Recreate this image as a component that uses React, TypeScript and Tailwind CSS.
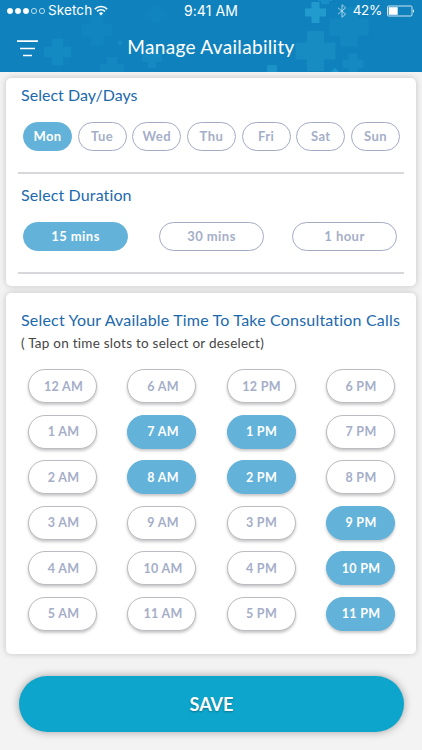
import * as React from 'react'
import clsx from 'clsx'

const days = ['Mon', 'Tue', 'Wed', 'Thu', 'Fri', 'Sat', 'Sun']

const durations = ['15 mins', '30 mins', '1 hour']

const columns = [
  ['12 AM', '1 AM', '2 AM', '3 AM', '4 AM', '5 AM'],
  ['6 AM', '7 AM', '8 AM', '9 AM', '10 AM', '11 AM'],
  ['12 PM', '1 PM', '2 PM', '3 PM', '4 PM', '5 PM'],
  ['6 PM', '7 PM', '8 PM', '9 PM', '10 PM', '11 PM'],
]

// x, y, arm length, arm thickness, opacity
const crosses = [
  [315.5, 12.5, 21, 8, 0.4],
  [315.5, 51, 40, 17, 0.16],
  [349, 27, 39, 17, 0.1],
  [353, 64, 21, 9, 0.13],
  [272, 70, 10, 10, 0.28],
  [335, 72, 7, 3, 0.35],
  [325, -3, 14, 8, 0.22],
  [57.5, 52, 27, 11, 0.14],
  [97, 30, 31, 13, 0.05],
  [112, 69, 24, 10, 0.1],
  [152, 58, 20, 8, 0.12],
  [120, 43, 5, 2, 0.15],
  [156, 14, 18, 8, 0.04],
]

const Header: React.FC = () => (
  <header className="relative h-[72px] shrink-0 overflow-hidden bg-[#0f82bd] text-white">
    <svg className="absolute inset-0" width="422" height="72" fill="#3cc1e6">
      {crosses.map(([x, y, size, t, o]) => (
        <path
          key={`${x}-${y}`}
          opacity={o}
          d={`M${x - t / 2} ${y - size / 2}h${t}v${(size - t) / 2}h${(size - t) / 2}v${t}h${-(size - t) / 2}v${(size - t) / 2}h${-t}v${-(size - t) / 2}h${-(size - t) / 2}v${-t}h${(size - t) / 2}z`}
        />
      ))}
    </svg>

    <div className="relative grid h-[21px] grid-cols-[1fr_auto_1fr] items-center pl-[7px] pr-[7px] font-['Inter'] text-[13.5px] leading-[21px]">
      <div className="flex items-center">
        <svg width="38" height="8" viewBox="0 0 38 8" fill="#fff" stroke="#fff">
          <circle cx="3" cy="4" r="2.7" strokeWidth="0.6" />
          <circle cx="11" cy="4" r="2.7" strokeWidth="0.6" />
          <circle cx="19" cy="4" r="2.7" strokeWidth="0.6" />
          <circle cx="27" cy="4" r="2.6" fill="none" strokeWidth="0.7" />
          <circle cx="35" cy="4" r="2.6" fill="none" strokeWidth="0.7" />
        </svg>
        <span className="ml-[3px] tracking-[0.1px]">Sketch</span>
        <svg className="ml-[2px]" width="14" height="11" viewBox="0 0 14 11" fill="none" stroke="#fff" strokeWidth="1.6">
          <path d="M0.8 4.1a8.8 8.8 0 0 1 12.4 0" />
          <path d="M3 6.4a5.7 5.7 0 0 1 8 0" />
          <path d="M7 10.4L4.9 8.2a3 3 0 0 1 4.2 0z" fill="#fff" stroke="none" />
        </svg>
      </div>
      <span className="text-[14px] tracking-[0.1px]">9:41 AM</span>
      <div className="flex items-center justify-end">
        <svg width="10" height="14" viewBox="0 0 10 14" fill="none" stroke="#fff" strokeWidth="0.8" opacity="0.75">
          <path d="M1 3.8L8.6 10.2L5 13.3V0.7L8.6 3.8L1 10.2" />
        </svg>
        <span className="ml-[6px] tracking-[-0.3px]">42%</span>
        <svg className="ml-[5px]" width="28" height="12" viewBox="0 0 28 12" fill="none" stroke="#fff">
          <rect x="0.5" y="1" width="24.5" height="10" rx="1.2" strokeWidth="0.8" />
          <rect x="1.7" y="2.2" width="9" height="7.6" fill="#fff" stroke="none" />
          <path d="M26 4.2q2 1.8 0 3.6z" fill="#fff" stroke="none" />
        </svg>
      </div>
    </div>

    <div className="relative flex h-[51px] items-center justify-center">
      <svg className="absolute left-[17px] top-[18px]" width="21" height="18" stroke="#fff" strokeWidth="1.7">
        <path d="M0 2.2h21M3 9.5h15M6 16.5h9" />
      </svg>
      <h1 className="pt-[1px] text-[19px] leading-6 tracking-[0.32px]">Manage Availability</h1>
    </div>
  </header>
)

interface IPillProps {
  label: string
  active: boolean
  className?: string
  onClick: () => void
}

const Pill: React.FC<IPillProps> = ({ label, active, className, onClick }) => (
  <button
    onClick={onClick}
    className={clsx(
      'flex h-[29px] items-center justify-center rounded-full border pt-[1px] text-[13px] font-bold tracking-[0.45px]',
      active ? 'border-[#62b2da] bg-[#62b2da] text-white' : 'border-[#a3aac4] bg-white text-[#a5aec8]',
      className
    )}
  >
    {label}
  </button>
)

const Slot: React.FC<IPillProps> = ({ label, active, className, onClick }) => (
  <button
    onClick={onClick}
    className={clsx(
      'flex h-[34px] w-[69px] items-center justify-center rounded-full border pt-[2px] text-[12.5px] font-bold tracking-[0.3px] shadow-[0_2px_3px_rgba(0,0,0,0.22)]',
      active ? 'border-[#62b2da] bg-[#62b2da] text-white' : 'border-[#bbbbc1] bg-white text-[#a5aec8]',
      className
    )}
  >
    {label}
  </button>
)

const App: React.FC = () => {
  const [selectedDays, setSelectedDays] = React.useState<string[]>(['Mon'])
  const [duration, setDuration] = React.useState('15 mins')
  const [slots, setSlots] = React.useState<string[]>(['7 AM', '8 AM', '1 PM', '2 PM', '9 PM', '10 PM', '11 PM'])

  const toggle = (list: string[], item: string) =>
    list.includes(item) ? list.filter(i => i !== item) : [...list, item]

  return (
    <div className="flex h-[750px] w-[422px] flex-col overflow-hidden bg-[#f3f3f3] font-['Lato',sans-serif]">
      <Header />

      <main className="flex flex-col px-[6px] pt-[6px]">
        <section className="h-[208px] rounded-[5px] bg-white px-3 shadow-[0_0_6px_rgba(0,0,0,0.2)]">
          <h2 className="pl-[3px] pt-[7px] text-[16px] leading-5 tracking-[0.03px] text-[#1c69ad]">Select Day/Days</h2>
          <div className="mt-[17px] flex justify-between pl-[5px] pr-[4px]">
            {days.map(day => (
              <Pill
                key={day}
                label={day}
                active={selectedDays.includes(day)}
                onClick={() => setSelectedDays(toggle(selectedDays, day))}
                className="w-[49px]"
              />
            ))}
          </div>
          <hr className="mt-[21px] border-t-2 border-[#d8d8dc]" />

          <h2 className="pl-[3px] pt-[11px] text-[16px] leading-5 tracking-[0.12px] text-[#1c69ad]">Select Duration</h2>
          <div className="mt-[17px] flex pl-[5px]">
            {durations.map((item, i) => (
              <Pill
                key={item}
                label={item}
                active={duration === item}
                onClick={() => setDuration(item)}
                className={clsx('w-[105px]', i === 1 && 'ml-[31px]', i === 2 && 'ml-[28px]')}
              />
            ))}
          </div>
          <hr className="mt-[21px] border-t-2 border-[#d8d8dc]" />
        </section>

        <section className="mt-[7px] h-[361px] rounded-[5px] bg-white px-[15px] shadow-[0_0_6px_rgba(0,0,0,0.2)]">
          <h2 className="whitespace-nowrap pt-[17px] text-[16px] leading-5 tracking-[0.19px] text-[#1c69ad]">
            Select Your Available Time To Take Consultation Calls
          </h2>
          <p className="mt-[4px] text-[13.5px] leading-[18px] tracking-[0.25px] text-[#454545]">
            ( Tap on time slots to select or deselect)
          </p>
          <div className="mt-[17px] flex gap-[30.5px] pl-[6.5px]">
            {columns.map((column, i) => (
              <div key={i} className="flex flex-col gap-[11.5px]">
                {column.map(slot => (
                  <Slot
                    key={slot}
                    label={slot}
                    active={slots.includes(slot)}
                    onClick={() => setSlots(toggle(slots, slot))}
                    className={i < 2 ? 'pl-[3px]' : 'pl-[1px]'}
                  />
                ))}
              </div>
            ))}
          </div>
        </section>

        <button className="ml-[13px] mt-[22px] h-[56px] w-[385px] rounded-full bg-[#0da5cb] pt-[1px] text-[18px] font-bold text-white shadow-[0_0_8px_rgba(0,0,0,0.35)] [text-shadow:0_1px_2px_rgba(0,0,0,0.3)]">
          SAVE
        </button>
      </main>
    </div>
  )
}

export default App
